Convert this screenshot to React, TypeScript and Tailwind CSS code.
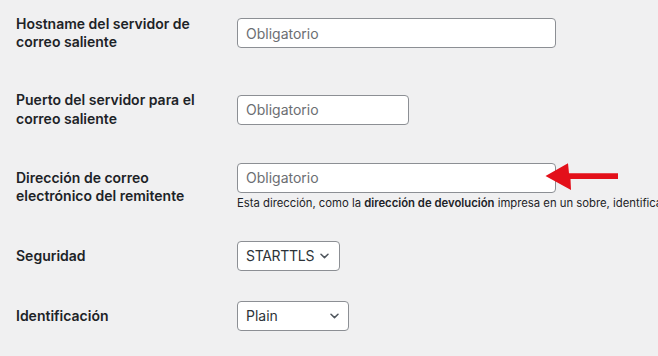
import React from "react";

function Chevron() {
  return (
    <svg width="9" height="6" viewBox="0 0 9 6" className="shrink-0">
      <path d="M1 1.2 L4.5 4.6 L8 1.2" fill="none" stroke="#50575e" strokeWidth="1.5" strokeLinecap="round" strokeLinejoin="round" />
    </svg>
  );
}

function Row({ label, children }: { label: string[]; children: React.ReactNode }) {
  return (
    <div className="flex items-center">
      <div className="w-[221px] shrink-0 py-5 pr-2.5 text-[14px] font-semibold leading-[1.3] text-[#1d2327]">
        {label.map((l, i) => (
          <div key={i}>{l}</div>
        ))}
      </div>
      <div className="py-[15px]">{children}</div>
    </div>
  );
}

export default function App() {
  return (
    <div className="relative w-[658px] h-[356px] overflow-hidden bg-[#f0f0f1] font-['Inter','Liberation_Sans',sans-serif] text-[#1d2327]">
      <div className="-mt-[5px] pl-4">
        <Row label={["Hostname del servidor de", "correo saliente"]}>
          <input
            placeholder="Obligatorio"
            className="block w-[319px] h-[30px] rounded-[4px] border border-[#8c8f94] bg-white px-2 text-[14px] outline-none placeholder:text-[#6b6e72]"
          />
        </Row>
        <Row label={["Puerto del servidor para el", "correo saliente"]}>
          <input
            placeholder="Obligatorio"
            className="block w-[172px] h-[30px] rounded-[4px] border border-[#8c8f94] bg-white px-2 text-[14px] outline-none placeholder:text-[#6b6e72]"
          />
        </Row>
        <Row label={["Dirección de correo", "electrónico del remitente"]}>
          <input
            placeholder="Obligatorio"
            className="block w-[319px] h-[30px] rounded-[4px] border border-[#8c8f94] bg-white px-2 text-[14px] outline-none placeholder:text-[#6b6e72]"
          />
          <p className="mt-[3px] whitespace-nowrap text-[11.3px] leading-[15px] text-[#1d2327]">
            Esta dirección, como la <strong className="font-semibold">dirección de devolución</strong> impresa en un sobre, identifica a quién se devuelven los mensajes
          </p>
        </Row>
        <Row label={["Seguridad"]}>
          <div className="flex w-[103px] h-[30px] items-center justify-between rounded-[4px] border border-[#8c8f94] bg-white pl-2 pr-[10px] text-[14px] text-[#2c3338]">
            <span className="tracking-[-0.3px]">STARTTLS</span>
            <Chevron />
          </div>
        </Row>
        <Row label={["Identificación"]}>
          <div className="flex w-[112px] h-[30px] items-center justify-between rounded-[4px] border border-[#8c8f94] bg-white pl-2 pr-[9px] text-[14px] text-[#2c3338]">
            <span>Plain</span>
            <Chevron />
          </div>
        </Row>
      </div>
      <svg className="absolute left-[544px] top-[161px]" width="78" height="31" viewBox="0 0 78 31">
        <polygon points="1.5,15 24,2.3 25,12.3 74,12.3 74,18 26.5,18 27,29" fill="#e3101a" />
      </svg>
    </div>
  );
}
